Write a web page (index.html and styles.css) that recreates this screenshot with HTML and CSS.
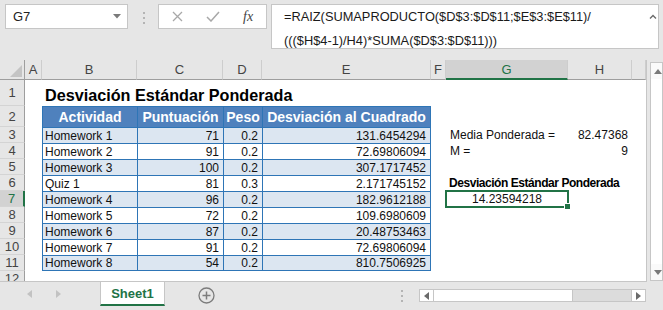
FILE: index.html
```html
<!DOCTYPE html>
<html lang="es">
<head>
    <meta charset="UTF-8">
    <title>Desviación Estándar Ponderada</title>
    <link rel="stylesheet" href="styles.css">
</head>
<body>

    <div class="app">
        <div class="toolbar">
            <div class="namebox">
                <span>G7</span>
                <svg width="8" height="5" viewBox="0 0 8 5"><path d="M0 0h8L4 4.5z" fill="#7a7a7a"/></svg>
            </div>
            <div class="grip"><i></i><i></i><i></i></div>
            <div class="fxbox">
                <svg class="cancel" width="11" height="11" viewBox="0 0 11 11"><path d="M1 1l9 9M10 1l-9 9" stroke="#a8a8a8" stroke-width="1.3"/></svg>
                <svg class="enter" width="14" height="11" viewBox="0 0 14 11"><path d="M1 6l4 4 8-9" fill="none" stroke="#a8a8a8" stroke-width="1.5"/></svg>
                <span class="fx">fx</span>
            </div>
            <div class="formula">
                =RAIZ(SUMAPRODUCTO($D$3:$D$11;$E$3:$E$11)/<br>
                ((($H$4-1)/H4)*SUMA($D$3:$D$11)))
                <svg class="collapse" width="8" height="5" viewBox="0 0 8 5"><path d="M1 4.5L4 1.5l3 3" fill="none" stroke="#6a6a6a" stroke-width="1.4"/></svg>
            </div>
        </div>

        <div class="workarea">
            <div class="sheet">
                <div class="corner"><svg width="12" height="12" viewBox="0 0 12 12"><path d="M12 0v12H0z" fill="#c4c4c4"/></svg></div>
                <div class="ch">A</div><div class="ch">B</div><div class="ch">C</div><div class="ch">D</div><div class="ch">E</div><div class="ch">F</div><div class="ch active">G</div><div class="ch">H</div><div class="ch"></div>

                <div class="rh">1</div><div></div><div class="title">Desviación Estándar Ponderada</div>

                <div class="rh">2</div><div></div>
                <div class="t hd">Actividad</div><div class="t hd">Puntuación</div><div class="t hd">Peso</div><div class="t hd e">Desviación al Cuadrado</div>

                <div class="rh">3</div><div></div>
                <div class="t band">Homework 1</div><div class="t band num">71</div><div class="t band num">0.2</div><div class="t band num e">131.6454294</div>
                <div></div><div class="cell">Media Ponderada =</div><div class="cell num">82.47368</div>

                <div class="rh">4</div><div></div>
                <div class="t">Homework 2</div><div class="t num">91</div><div class="t num">0.2</div><div class="t num e">72.69806094</div>
                <div></div><div class="cell">M =</div><div class="cell num">9</div>

                <div class="rh">5</div><div></div>
                <div class="t band">Homework 3</div><div class="t band num">100</div><div class="t band num">0.2</div><div class="t band num e">307.1717452</div>

                <div class="rh">6</div><div></div>
                <div class="t">Quiz 1</div><div class="t num">81</div><div class="t num">0.3</div><div class="t num e">2.171745152</div>
                <div></div><div class="cell label">Desviación Estándar Ponderada</div>

                <div class="rh active">7</div><div></div>
                <div class="t band">Homework 4</div><div class="t band num">96</div><div class="t band num">0.2</div><div class="t band num e">182.9612188</div>
                <div></div><div class="cell selected">14.23594218<span class="handle"></span></div>

                <div class="rh">8</div><div></div>
                <div class="t">Homework 5</div><div class="t num">72</div><div class="t num">0.2</div><div class="t num e">109.6980609</div>

                <div class="rh">9</div><div></div>
                <div class="t band">Homework 6</div><div class="t band num">87</div><div class="t band num">0.2</div><div class="t band num e">20.48753463</div>

                <div class="rh">10</div><div></div>
                <div class="t">Homework 7</div><div class="t num">91</div><div class="t num">0.2</div><div class="t num e">72.69806094</div>

                <div class="rh">11</div><div></div>
                <div class="t band last">Homework 8</div><div class="t band num last">54</div><div class="t band num last">0.2</div><div class="t band num e last">810.7506925</div>

                <div class="rh partial">12</div>
            </div>

            <div class="vscroll">
                <div class="sbtn"><svg width="8" height="5" viewBox="0 0 8 5"><path d="M0 5h8L4 0z" fill="#7a7a7a"/></svg></div>
                <div class="strack"></div>
                <div class="sbtn"><svg width="8" height="5" viewBox="0 0 8 5"><path d="M0 0h8L4 5z" fill="#7a7a7a"/></svg></div>
            </div>
        </div>

        <div class="tabbar">
            <div class="tabnav">
                <svg width="5" height="8" viewBox="0 0 5 8"><path d="M5 0v8L0 4z" fill="#c2c2c2"/></svg>
                <svg width="5" height="8" viewBox="0 0 5 8"><path d="M0 0v8l5-4z" fill="#c2c2c2"/></svg>
            </div>
            <div class="tab">Sheet1</div>
            <div class="addsheet">
                <svg width="17" height="17" viewBox="0 0 17 17"><circle cx="8.5" cy="8.5" r="7.5" fill="none" stroke="#7c7c7c" stroke-width="1.3"/><path d="M8.5 4.5v8M4.5 8.5h8" stroke="#7c7c7c" stroke-width="1.5"/></svg>
            </div>
            <div class="grip small"><i></i><i></i><i></i></div>
            <div class="hscroll">
                <div class="hbtn"><svg width="5" height="8" viewBox="0 0 5 8"><path d="M5 0v8L0 4z" fill="#6a6a6a"/></svg></div>
                <div class="thumb"></div>
                <div class="htrack"></div>
                <div class="hbtn"><svg width="5" height="8" viewBox="0 0 5 8"><path d="M0 0v8l5-4z" fill="#6a6a6a"/></svg></div>
            </div>
        </div>
    </div>

</body>
</html>
```

FILE: styles.css
```css
body {
    margin: 0;
    background: #e6e6e6;
    font-family: "Liberation Sans", Arial, sans-serif;
    color: #222;
    overflow: hidden;
}

.app {
    width: 663px;
    height: 310px;
    overflow: hidden;
}

/* formula bar */
.toolbar {
    height: 60px;
    box-sizing: border-box;
    padding: 4px 0 0 5px;
    display: flex;
    align-items: flex-start;
}

.namebox {
    width: 123px;
    height: 25px;
    box-sizing: border-box;
    background: #fff;
    border: 1px solid #c6c6c6;
    display: flex;
    align-items: center;
    justify-content: space-between;
    padding: 0 6px 0 7px;
    font-size: 13px;
}

.grip {
    display: flex;
    flex-direction: column;
    gap: 3px;
    margin: 8px 13px 0 15px;
}

.grip i {
    display: block;
    width: 2px;
    height: 2px;
    background: #b4b4b4;
}

.fxbox {
    width: 109px;
    height: 25px;
    box-sizing: border-box;
    background: #fff;
    border: 1px solid #c6c6c6;
    display: flex;
    align-items: center;
    padding-left: 13px;
}

.fxbox .enter {
    margin-left: 23px;
}

.fx {
    margin-left: 23px;
    font-family: "Liberation Serif", serif;
    font-style: italic;
    font-size: 14px;
    color: #444;
}

.formula {
    position: relative;
    margin-left: 4px;
    width: 388px;
    height: 45px;
    box-sizing: border-box;
    background: #fff;
    border: 1px solid #c6c6c6;
    padding-left: 12px;
    font-size: 12.8px;
    line-height: 24px;
    color: #1a1a1a;
}

.collapse {
    position: absolute;
    right: 1px;
    top: 9px;
}

/* sheet */
.workarea {
    height: 222px;
    display: flex;
    align-items: flex-start;
}

.sheet {
    width: 647px;
    height: 222px;
    box-sizing: border-box;
    border-right: 1px solid #c6c6c6;
    border-bottom: 1px solid #c6c6c6;
    background: #fff;
    display: grid;
    grid-template-columns: 25px 17px 95px 86px 39px 169px 15px 122px 64px 14px;
    grid-template-rows: 20px 26px 21px repeat(9, 16px) 10px;
    font-size: 12px;
}

.corner {
    background: #e6e6e6;
    border-right: 1px solid #9e9e9e;
    border-bottom: 1px solid #9e9e9e;
    display: flex;
    align-items: flex-end;
    justify-content: flex-end;
    padding: 0 2px 2px 0;
}

.ch {
    background: #e6e6e6;
    border-right: 1px solid #cdcdcd;
    border-bottom: 1px solid #9e9e9e;
    display: flex;
    align-items: center;
    justify-content: center;
    font-size: 13px;
    color: #444;
}

.ch.active {
    background: #d2d2d2;
    color: #217346;
    border-bottom: 2px solid #217346;
}

.rh {
    grid-column: 1;
    background: #e6e6e6;
    border-right: 1px solid #9e9e9e;
    border-bottom: 1px solid #d4d4d4;
    display: flex;
    align-items: center;
    justify-content: center;
    font-size: 13px;
    color: #444;
}

.rh.active {
    background: #d2d2d2;
    color: #217346;
    border-right: 2px solid #217346;
}

.rh.partial {
    align-items: flex-start;
    line-height: 16px;
    overflow: hidden;
    border-bottom: none;
}

.sheet > div {
    box-sizing: border-box;
    min-width: 0;
}

.title {
    grid-column: span 4;
    font-size: 16.2px;
    font-weight: bold;
    color: #000;
    display: flex;
    align-items: flex-end;
    padding: 0 0 1px 3px;
    white-space: nowrap;
}

.t {
    border-left: 1px solid #2e75b6;
    border-top: 1px solid #2e75b6;
    display: flex;
    align-items: center;
    padding: 0 4px 0 2px;
    white-space: nowrap;
    color: #111;
}

.t.e {
    border-right: 1px solid #2e75b6;
}

.t.last {
    border-bottom: 1px solid #2e75b6;
}

.t.hd {
    background: #4f81bd;
    color: #fff;
    font-weight: bold;
    font-size: 14px;
    justify-content: center;
    padding: 0;
}

.band {
    background: #dce6f1;
}

.num {
    justify-content: flex-end;
}

.cell {
    display: flex;
    align-items: center;
    padding: 0 4px 0 4px;
    white-space: nowrap;
    color: #111;
}

.cell.label {
    grid-column: span 2;
    font-weight: bold;
    font-size: 12px;
    letter-spacing: -0.45px;
    padding-left: 3px;
    color: #000;
}

.cell.selected {
    position: relative;
    justify-content: center;
    outline: 2px solid #217346;
    outline-offset: -1px;
}

.handle {
    position: absolute;
    right: -3px;
    bottom: -3px;
    width: 5px;
    height: 5px;
    background: #217346;
    border: 1px solid #fff;
}

/* scrollbars */
.vscroll {
    margin: 2px 0 0 3px;
    width: 16px;
    height: 219px;
    box-sizing: border-box;
    border: 1px solid #c6c6c6;
    background: #fff;
    display: flex;
    flex-direction: column;
}

.sbtn {
    height: 16px;
    display: flex;
    align-items: center;
    padding-left: 3px;
    background: #fafafa;
}

.strack {
    flex: 1;
}

.tabbar {
    height: 28px;
    display: flex;
    align-items: flex-start;
}

.tabnav {
    width: 100px;
    height: 24px;
    display: flex;
    align-items: center;
    gap: 24px;
    padding-left: 27px;
    box-sizing: border-box;
}

.tab {
    width: 65px;
    height: 24px;
    box-sizing: border-box;
    background: #fff;
    border-left: 1px solid #c6c6c6;
    border-right: 1px solid #c6c6c6;
    border-bottom: 2px solid #217346;
    display: flex;
    align-items: center;
    justify-content: center;
    font-size: 13px;
    font-weight: bold;
    color: #217346;
}

.addsheet {
    width: 82px;
    height: 26px;
    display: flex;
    align-items: center;
    padding-left: 33px;
    box-sizing: border-box;
}

.grip.small {
    margin: 8px 0 0 154px;
}

.hscroll {
    margin: 7px 0 0 16px;
    width: 227px;
    height: 13px;
    box-sizing: border-box;
    border: 1px solid #c6c6c6;
    display: flex;
}

.hbtn {
    width: 13px;
    background: #fff;
    display: flex;
    align-items: center;
    justify-content: center;
}

.thumb {
    width: 138px;
    background: #fff;
    border-left: 1px solid #c6c6c6;
    border-right: 1px solid #c6c6c6;
}

.htrack {
    flex: 1;
    background: #dcdcdc;
    border-right: 1px solid #c6c6c6;
}
```
